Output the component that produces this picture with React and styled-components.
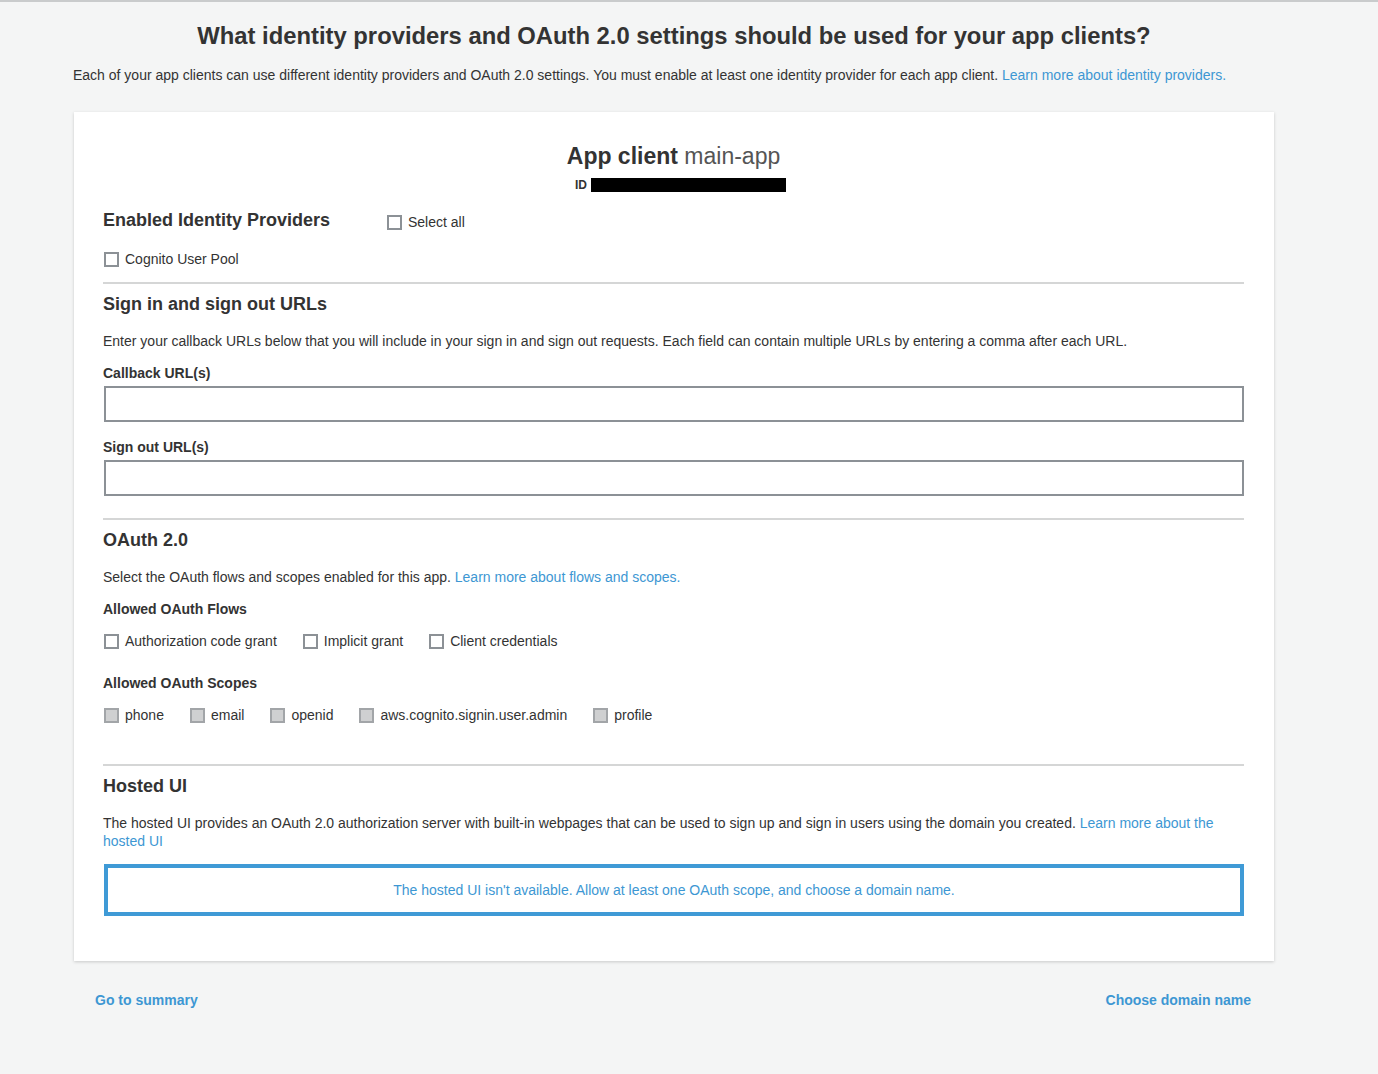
import React from 'react';
import styled, { createGlobalStyle } from 'styled-components';

const GlobalStyle = createGlobalStyle`
  html, body {
    margin: 0;
    padding: 0;
    background: #f4f5f5;
  }
  body {
    font-family: "Liberation Sans", Arial, sans-serif;
    color: #333;
  }
`;

const Page = styled.div`
  min-height: 1074px;
  border-top: 2px solid #c9cbcc;
  box-sizing: border-box;
  padding-top: 20px;
`;

const Wrap = styled.div`
  width: 1200px;
  margin-left: 74px;
`;

const PageTitle = styled.h1`
  margin: 0;
  font-size: 23.8px;
  line-height: 28px;
  font-weight: bold;
  text-align: center;
  color: #333;
`;

const Intro = styled.p`
  margin: 16px 0 0 -1px;
  font-size: 14px;
  line-height: 18px;
`;

const Link = styled.a`
  color: #3d97d3;
  text-decoration: none;
  cursor: pointer;
`;

const Card = styled.div`
  margin-top: 28px;
  background: #fff;
  box-shadow: 0 1px 3px rgba(0, 0, 0, 0.18);
  padding: 31px 30px 45px 29px;
`;

const ClientHead = styled.div`
  text-align: center;
`;

const ClientTitle = styled.h2`
  margin: 0;
  font-size: 23px;
  line-height: 26px;
  font-weight: bold;
  color: #333;

  span {
    font-weight: normal;
    color: #555;
  }
`;

const IdLine = styled.div`
  margin-top: 8px;
  display: flex;
  justify-content: center;
  align-items: center;
  gap: 4px;
  font-size: 12px;
  line-height: 16px;
  font-weight: bold;
  padding-left: 14px;
`;

const Redacted = styled.span`
  display: inline-block;
  width: 195px;
  height: 14px;
  background: #000;
`;

const ProviderRow = styled.div`
  margin-top: 16px;
  display: flex;
  align-items: flex-end;
`;

const Heading = styled.h3`
  margin: ${(p) => p.$top || 0}px 0 0;
  font-size: 18px;
  line-height: 22px;
  font-weight: bold;
  color: #333;
  width: ${(p) => (p.$width ? `${p.$width}px` : 'auto')};
  flex-shrink: 0;
`;

const Text = styled.p`
  margin: ${(p) => p.$top || 0}px 0 0;
  font-size: 14px;
  line-height: 18px;
`;

const Label = styled.div`
  margin-top: ${(p) => p.$top || 0}px;
  font-size: 14px;
  line-height: 16px;
  font-weight: bold;
`;

const Input = styled.input`
  display: block;
  box-sizing: border-box;
  width: calc(100% - 1px);
  margin-left: 1px;
  height: 36px;
  margin-top: 5px;
  border: 2px solid #8c9196;
  border-radius: 0;
  background: #fff;
  outline: none;
  font-size: 14px;
  padding: 0 8px;
`;

const Divider = styled.hr`
  margin: ${(p) => p.$top || 0}px 0 0;
  border: none;
  height: 2px;
  background: #d5d6d6;
`;

const CheckRow = styled.div`
  margin-top: ${(p) => p.$top || 0}px;
  display: flex;
  align-items: center;
  gap: 25px;
`;

const CheckItem = styled.label`
  display: inline-flex;
  align-items: center;
  gap: 6px;
  font-size: 14px;
  line-height: 18px;
  color: #333;
  cursor: pointer;
`;

const Box = styled.span`
  display: inline-block;
  box-sizing: border-box;
  width: 15px;
  height: 15px;
  border: 2px solid ${(p) => (p.$disabled ? '#a2a5a8' : '#8c9196')};
  background: ${(p) => (p.$disabled ? '#cfd0d1' : '#fff')};
  margin-left: 1px;
`;

const Notice = styled.div`
  margin-top: 14px;
  margin-left: 1px;
  height: 52px;
  box-sizing: border-box;
  border: 4px solid #3f9ad6;
  display: flex;
  align-items: center;
  justify-content: center;
  font-size: 14px;
  color: #3d97d3;
`;

const Footer = styled.div`
  margin-top: 31px;
  padding: 0 23px 0 21px;
  display: flex;
  justify-content: space-between;
`;

const FooterLink = styled.a`
  font-size: 14px;
  line-height: 16px;
  font-weight: bold;
  color: #3d97d3;
  text-decoration: none;
  cursor: pointer;
`;

const Check = ({ children, disabled }) => (
  <CheckItem>
    <Box $disabled={disabled} />
    {children}
  </CheckItem>
);

const flows = ['Authorization code grant', 'Implicit grant', 'Client credentials'];
const scopes = ['phone', 'email', 'openid', 'aws.cognito.signin.user.admin', 'profile'];

const App = () => (
  <Page>
    <GlobalStyle />
    <Wrap>
      <PageTitle>What identity providers and OAuth 2.0 settings should be used for your app clients?</PageTitle>
      <Intro>
        Each of your app clients can use different identity providers and OAuth 2.0 settings. You must enable
        at least one identity provider for each app client. <Link>Learn more about identity providers.</Link>
      </Intro>

      <Card>
        <ClientHead>
          <ClientTitle>
            App client <span>main-app</span>
          </ClientTitle>
          <IdLine>
            ID <Redacted />
          </IdLine>
        </ClientHead>

        <ProviderRow>
          <Heading $width={283}>Enabled Identity Providers</Heading>
          <Check>Select all</Check>
        </ProviderRow>
        <CheckRow $top={19}>
          <Check>Cognito User Pool</Check>
        </CheckRow>

        <Divider $top={14} />
        <Heading $top={9}>Sign in and sign out URLs</Heading>
        <Text $top={17}>
          Enter your callback URLs below that you will include in your sign in and sign out requests. Each field
          can contain multiple URLs by entering a comma after each URL.
        </Text>
        <Label $top={15}>Callback URL(s)</Label>
        <Input />
        <Label $top={17}>Sign out URL(s)</Label>
        <Input />

        <Divider $top={22} />
        <Heading $top={9}>OAuth 2.0</Heading>
        <Text $top={17}>
          Select the OAuth flows and scopes enabled for this app. <Link>Learn more about flows and scopes.</Link>
        </Text>
        <Label $top={15}>Allowed OAuth Flows</Label>
        <CheckRow $top={15}>
          {flows.map((f) => (
            <Check key={f}>{f}</Check>
          ))}
        </CheckRow>
        <Label $top={25}>Allowed OAuth Scopes</Label>
        <CheckRow $top={15}>
          {scopes.map((s) => (
            <Check key={s} disabled>
              {s}
            </Check>
          ))}
        </CheckRow>

        <Divider $top={40} />
        <Heading $top={9}>Hosted UI</Heading>
        <Text $top={17}>
          The hosted UI provides an OAuth 2.0 authorization server with built-in webpages that can be used to sign
          up and sign in users using the domain you created. <Link>Learn more about the hosted UI</Link>
        </Text>
        <Notice>The hosted UI isn't available. Allow at least one OAuth scope, and choose a domain name.</Notice>
      </Card>

      <Footer>
        <FooterLink>Go to summary</FooterLink>
        <FooterLink>Choose domain name</FooterLink>
      </Footer>
    </Wrap>
  </Page>
);

export default App;
